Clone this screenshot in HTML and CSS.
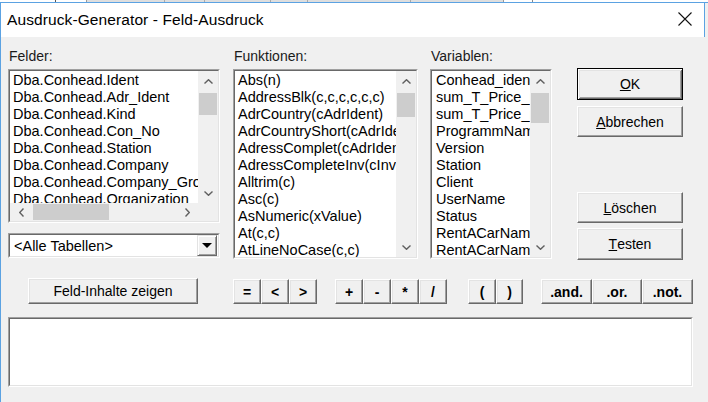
FILE: index.html
```html
<!DOCTYPE html>
<html>
<head>
<meta charset="utf-8">
<link rel="stylesheet" href="styles.css">
</head>
<body>
<div class="deskbar"><span class="mark"></span><span class="tabs"><i class="t1"></i><i class="t2"></i><i class="t3"></i><i class="t4"></i><i class="t5"></i></span><span class="mark2"></span></div>
<div class="window">
  <div class="titlebar">
    <span class="title">Ausdruck-Generator - Feld-Ausdruck</span>
    <svg class="close" width="14" height="14" viewBox="0 0 14 14"><path d="M0.5 0.5 L13.5 13.5 M13.5 0.5 L0.5 13.5" stroke="#111" stroke-width="1.1" fill="none"/></svg>
  </div>
  <div class="client">
    <div class="main">
      <div class="col col-felder">
        <div class="label">Felder:</div>
        <div class="listbox lb-felder">
          <div class="lb-in">
            <div class="items">
              <div>Dba.Conhead.Ident</div>
              <div>Dba.Conhead.Adr_Ident</div>
              <div>Dba.Conhead.Kind</div>
              <div>Dba.Conhead.Con_No</div>
              <div>Dba.Conhead.Station</div>
              <div>Dba.Conhead.Company</div>
              <div>Dba.Conhead.Company_Group</div>
              <div>Dba.Conhead.Organization</div>
            </div>
            <div class="vscroll">
              <div class="sbtn"><svg width="9" height="5" viewBox="0 0 9 5"><polyline points="0.5,4.5 4.5,0.7 8.5,4.5" fill="none" stroke="#606060" stroke-width="1.4"/></svg></div>
              <div class="track"><div class="thumb th-felder"></div></div>
              <div class="sbtn"><svg width="9" height="5" viewBox="0 0 9 5"><polyline points="0.5,0.5 4.5,4.3 8.5,0.5" fill="none" stroke="#606060" stroke-width="1.4"/></svg></div>
            </div>
            <div class="hscroll">
              <div class="hbtn"><svg width="5" height="9" viewBox="0 0 5 9"><polyline points="4.5,0.5 0.7,4.5 4.5,8.5" fill="none" stroke="#606060" stroke-width="1.4"/></svg></div>
              <div class="htrack"><div class="hthumb"></div></div>
              <div class="hbtn"><svg width="5" height="9" viewBox="0 0 5 9"><polyline points="0.5,0.5 4.3,4.5 0.5,8.5" fill="none" stroke="#606060" stroke-width="1.4"/></svg></div>
            </div>
            <div class="corner"></div>
          </div>
        </div>
        <div class="combo">
          <div class="combo-in">
            <span class="combo-text">&lt;Alle Tabellen&gt;</span>
            <span class="combo-btn"><svg width="10" height="5" viewBox="0 0 10 5"><polygon points="0,0 10,0 5,5" fill="#000"/></svg></span>
          </div>
        </div>
      </div>
      <div class="col col-funk">
        <div class="label">Funktionen:</div>
        <div class="listbox lb-tall">
          <div class="lb-in lb-in-v">
            <div class="items">
              <div>Abs(n)</div>
              <div>AddressBlk(c,c,c,c,c,c)</div>
              <div>AdrCountry(cAdrIdent)</div>
              <div>AdrCountryShort(cAdrIdent)</div>
              <div>AdressComplet(cAdrIdent)</div>
              <div>AdressCompleteInv(cInvoice)</div>
              <div>Alltrim(c)</div>
              <div>Asc(c)</div>
              <div>AsNumeric(xValue)</div>
              <div>At(c,c)</div>
              <div>AtLineNoCase(c,c)</div>
            </div>
            <div class="vscroll">
              <div class="sbtn"><svg width="9" height="5" viewBox="0 0 9 5"><polyline points="0.5,4.5 4.5,0.7 8.5,4.5" fill="none" stroke="#606060" stroke-width="1.4"/></svg></div>
              <div class="track"><div class="thumb th-funk"></div></div>
              <div class="sbtn"><svg width="9" height="5" viewBox="0 0 9 5"><polyline points="0.5,0.5 4.5,4.3 8.5,0.5" fill="none" stroke="#606060" stroke-width="1.4"/></svg></div>
            </div>
          </div>
        </div>
      </div>
      <div class="col col-var">
        <div class="label">Variablen:</div>
        <div class="listbox lb-tall">
          <div class="lb-in lb-in-v">
            <div class="items">
              <div>Conhead_ident</div>
              <div>sum_T_Price_net</div>
              <div>sum_T_Price_net</div>
              <div>ProgrammName</div>
              <div>Version</div>
              <div>Station</div>
              <div>Client</div>
              <div>UserName</div>
              <div>Status</div>
              <div>RentACarName</div>
              <div>RentACarName</div>
            </div>
            <div class="vscroll">
              <div class="sbtn"><svg width="9" height="5" viewBox="0 0 9 5"><polyline points="0.5,4.5 4.5,0.7 8.5,4.5" fill="none" stroke="#606060" stroke-width="1.4"/></svg></div>
              <div class="track"><div class="thumb th-var"></div></div>
              <div class="sbtn"><svg width="9" height="5" viewBox="0 0 9 5"><polyline points="0.5,0.5 4.5,4.3 8.5,0.5" fill="none" stroke="#606060" stroke-width="1.4"/></svg></div>
            </div>
          </div>
        </div>
      </div>
      <div class="btncol">
        <div class="btn btn-default"><u>O</u>K</div>
        <div class="btn btn-abbr"><u>A</u>bbrechen</div>
        <div class="btn btn-loe"><u>L</u>öschen</div>
        <div class="btn btn-test"><u>T</u>esten</div>
      </div>
    </div>
    <div class="ops">
      <div class="btn btn-feld">Feld-Inhalte zeigen</div>
      <div class="group g1">
        <div class="btn op">=</div><div class="btn op">&lt;</div><div class="btn op">&gt;</div>
      </div>
      <div class="group g2">
        <div class="btn op">+</div><div class="btn op">-</div><div class="btn op">*</div><div class="btn op">/</div>
      </div>
      <div class="group g3">
        <div class="btn op">(</div><div class="btn op op27">)</div>
      </div>
      <div class="group g4">
        <div class="btn op wide">.and.</div><div class="btn op wide w50">.or.</div><div class="btn op wide">.not.</div>
      </div>
    </div>
    <div class="memo"><div class="memo-in"></div></div>
  </div>
</div>
</body>
</html>
```

FILE: styles.css
```css
* { box-sizing: border-box; }
html, body { margin: 0; padding: 0; }
body {
  width: 708px;
  height: 402px;
  overflow: hidden;
  background: #f0f0f0;
  font-family: "Liberation Sans", Arial, sans-serif;
  font-size: 14px;
  color: #000;
}

.deskbar {
  height: 2px;
  background: #fff;
  display: flex;
}
.deskbar .mark { width: 1px; background: #555; margin-left: 55px; }
.deskbar .tabs {
  margin-left: 30px;
  width: 418px;
  background: #dedede;
  display: flex;
  border-left: 1px solid #999;
  border-right: 1px solid #999;
}
.deskbar .tabs i { display: block; height: 2px; border-right: 1px solid #aaa; }
.deskbar .tabs .t1 { width: 78px; }
.deskbar .tabs .t2 { width: 40px; }
.deskbar .tabs .t3 { width: 66px; }
.deskbar .tabs .t4 { width: 37px; }
.deskbar .tabs .t5 { width: 103px; }
.deskbar .mark2 { width: 1px; background: #888; margin-left: 28px; }

.window {
  border-left: 1px solid #5ba2e2;
  border-top: 1px solid #5ba2e2;
  height: 400px;
}

.titlebar {
  height: 34px;
  background: #fff;
  margin-right: 3px;
  border-right: 1px solid #5ba2e2;
  display: flex;
  align-items: center;
  justify-content: space-between;
  padding-left: 6px;
  padding-right: 12px;
}
.title {
  font-size: 15.5px;
  color: #000;
  letter-spacing: 0.1px;
}
.close { display: block; margin-top: -2px; }

.client {
  background: #f0f0f0;
  padding: 11px 0 0 7px;
  height: 365px;
}

.main {
  display: flex;
  align-items: flex-start;
}
.col { display: flex; flex-direction: column; }
.col-felder { width: 212px; margin-right: 13px; }
.col-funk { width: 185px; margin-right: 12px; }
.col-var { width: 122px; margin-right: 25px; }

.label {
  height: 16px;
  line-height: 16px;
  margin-bottom: 5px;
  padding-left: 1px;
  color: #1a1a1a;
}

/* sunken field: two 1px borders */
.listbox, .combo, .memo {
  border: 1px solid;
  border-color: #a0a0a0 #fff #fff #a0a0a0;
}
.lb-in, .combo-in, .memo-in {
  border: 1px solid;
  border-color: #696969 #e3e3e3 #e3e3e3 #696969;
  height: 100%;
}

.lb-felder { height: 154px; }
.lb-tall { height: 190px; }

.lb-in {
  display: grid;
  grid-template-columns: 1fr 20px;
  grid-template-rows: 1fr 18px;
  background: #fff;
}
.lb-in-v { grid-template-rows: 1fr; }

.items {
  overflow: hidden;
  white-space: nowrap;
  padding: 1px 0 0 3px;
  line-height: 17px;
  font-size: 14.5px;
  background: #fff;
}
.col-var .items { padding-left: 4px; }

.vscroll {
  display: flex;
  flex-direction: column;
  background: #f0f0f0;
}
.sbtn {
  height: 20px;
  display: flex;
  align-items: center;
  justify-content: center;
  flex: none;
}
.sbtn svg, .hbtn svg, .combo-btn svg { display: block; }
.track { flex: 1; padding-top: 2px; }
.thumb { background: #cdcdcd; margin-left: 1px; width: 18px; }
.th-felder { height: 22px; }
.th-funk { height: 24px; }
.th-var { height: 30px; }

.hscroll {
  display: flex;
  background: #f0f0f0;
}
.hbtn {
  width: 22px;
  display: flex;
  align-items: center;
  justify-content: center;
  flex: none;
}
.htrack { flex: 1; padding-left: 1px; padding-top: 1px; }
.hthumb { width: 76px; height: 16px; background: #cdcdcd; }
.corner { background: #f0f0f0; }

.combo { height: 25px; margin-top: 10px; }
.combo-in {
  background: #fff;
  display: flex;
  align-items: center;
  justify-content: space-between;
}
.combo-text { padding-left: 4px; font-size: 14.5px; }
.combo-btn {
  width: 20px;
  height: 21px;
  background: #f0f0f0;
  border: 1px solid;
  border-color: #e3e3e3 #696969 #696969 #e3e3e3;
  box-shadow: inset 1px 1px #fff, inset -1px -1px #a0a0a0;
  display: flex;
  align-items: center;
  justify-content: center;
  margin-right: 1px;
}

/* raised buttons */
.btn {
  background: #f0f0f0;
  border: 1px solid;
  border-color: #fff #696969 #696969 #fff;
  box-shadow: inset -1px -1px #a0a0a0, inset 1px 1px #e3e3e3;
  display: flex;
  align-items: center;
  justify-content: center;
  white-space: nowrap;
}
.btn u { text-decoration: underline; text-underline-offset: 1px; }

.btncol {
  width: 106px;
  display: flex;
  flex-direction: column;
  padding-top: 20px;
}
.btncol .btn { height: 31px; }
.btn-default {
  border-color: #000;
  box-shadow: inset 1px 1px #fff, inset -1px -1px #696969, inset 2px 2px #e3e3e3, inset -2px -2px #a0a0a0;
}
.btncol .btn-default { height: 32px; margin-bottom: 6px; }
.btncol .btn-loe { margin-top: 55px; margin-bottom: 5px; }
.btncol .btn-test { height: 32px; }

.ops {
  display: flex;
  align-items: flex-end;
  margin-top: 18px;
}
.btn-feld {
  width: 170px;
  height: 26px;
  margin-left: 20px;
  margin-right: 35px;
}
.group { display: flex; }
.g1 { margin-right: 18px; }
.g2 { margin-right: 21px; }
.g3 { margin-right: 18px; }
.op {
  width: 28px;
  height: 25px;
  font-weight: bold;
  font-size: 14px;
}
.op27 { width: 27px; }
.wide { width: 51px; }
.w50 { width: 50px; }

.memo {
  width: 685px;
  height: 70px;
  margin-top: 13px;
}
.memo-in { background: #fff; }
```
